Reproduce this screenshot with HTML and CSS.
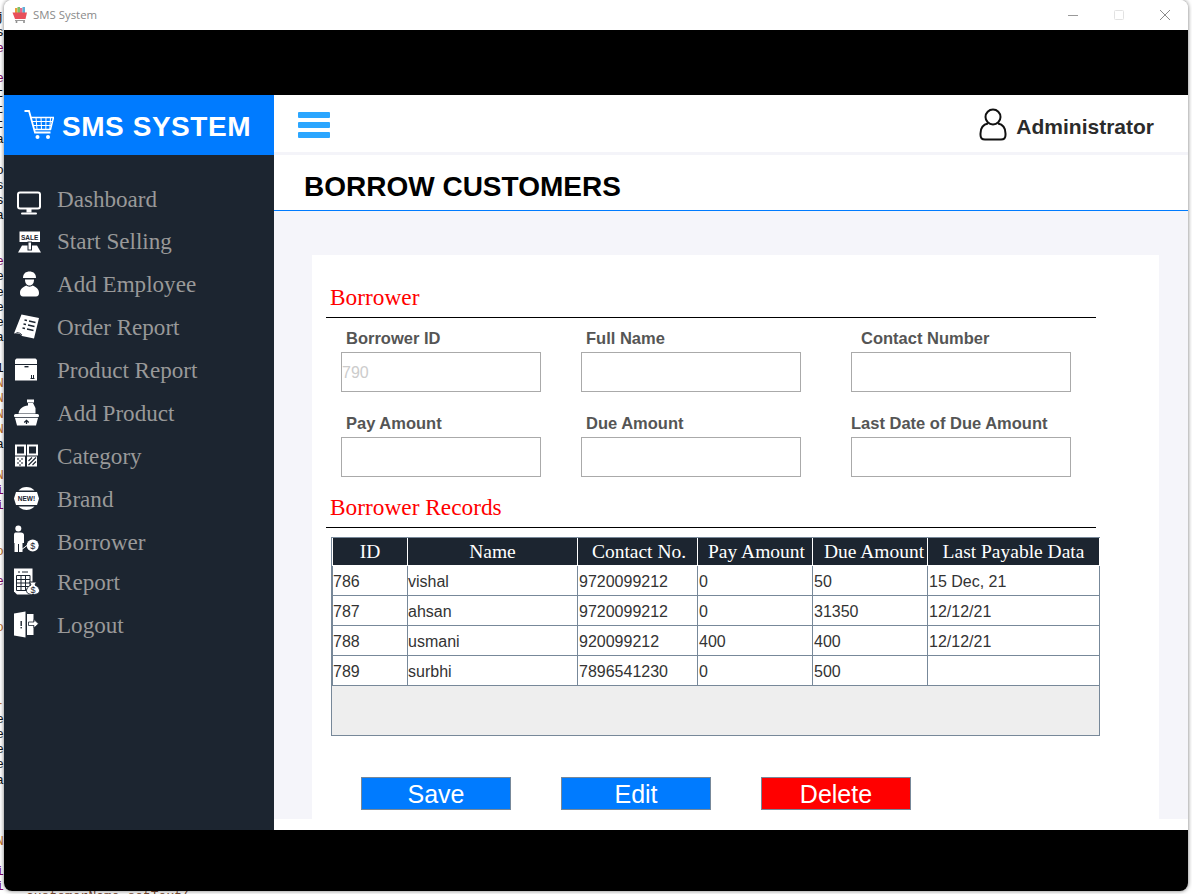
FILE: index.html
```html
<!DOCTYPE html>
<html lang="en">
<head>
    <meta charset="UTF-8">
    <meta name="viewport" content="width=device-width, initial-scale=1.0">
    <title>SMS System</title>
    <link rel="stylesheet" href="styles.css">
</head>
<body>

<!-- the code editor showing behind the window -->
<pre class="behind">j
s
<span class="pur">e</span>

<span class="pur">e</span>
t
t
t
a

o
s
s
a


<span class="pur">e</span>
e
e
e
e
a

1
<span class="org">N</span>
<span class="org">N</span>
<span class="org">N</span>
<span class="org">N</span>
a

<span class="org">N</span>
<span class="pur">i</span>
<span class="pur">i</span>


<span class="org">o</span>

<span class="pur">e</span>


<span class="org">o</span>




<span class="org">-</span>
e
e
e
e
a



<span class="org">N</span>

<span class="pur">i</span>
<span class="pur">i</span></pre>
<div class="behind-line">customerName.setText(</div>

<div class="window">

    <div class="titlebar">
        <svg class="app-icon" width="16" height="16" viewBox="0 0 16 16">
            <rect x="3" y="1" width="2.5" height="5.5" fill="#e8a13a"/>
            <rect x="5.5" y="0" width="2.5" height="6.5" fill="#7cc06a"/>
            <rect x="8" y="1" width="2.5" height="5.5" fill="#e86a8a"/>
            <rect x="10.5" y="0" width="2.5" height="6.5" fill="#5fb0d8"/>
            <path d="M0.5 5.5 H15 L13.5 12 H3 Z" fill="#e8505b"/>
            <path d="M3 13.5 H13" stroke="#9a9a9a" stroke-width="1"/>
            <circle cx="4.5" cy="15" r="1" fill="#888"/>
            <circle cx="12" cy="15" r="1" fill="#888"/>
        </svg>
        <span class="app-name">SMS System</span>
        <div class="controls">
            <div class="control"><svg width="12" height="12" viewBox="0 0 12 12"><path d="M1 6.5 H11" stroke="#999" stroke-width="1"/></svg></div>
            <div class="control"><svg width="12" height="12" viewBox="0 0 12 12"><rect x="1.5" y="1.5" width="9" height="9" rx="1" fill="none" stroke="#e2e2e2" stroke-width="1"/></svg></div>
            <div class="control"><svg width="12" height="12" viewBox="0 0 12 12"><path d="M1 1 L11 11 M11 1 L1 11" stroke="#8c8c8c" stroke-width="1"/></svg></div>
        </div>
    </div>

    <div class="black-band top-band"></div>

    <div class="app">
        <div class="sidebar">
            <div class="brand">
                <svg class="cart" width="30" height="30" viewBox="0 0 30 30" fill="none" stroke="#fff">
                    <path d="M0.5 1 H5 L11 22.5 H26.5" stroke-width="1.8"/>
                    <path d="M6.8 7.5 H29.5 L26.5 19.5 H10" stroke-width="1.5"/>
                    <path d="M8 11.5 H28.5 M9 15.5 H27.5 M12 7.5 L13 19.5 M17 7.5 L17.5 19.5 M22 7.5 L21.8 19.5 M26.5 7.5 L25.8 19.5" stroke-width="1"/>
                    <circle cx="13.5" cy="27" r="2" fill="#fff" stroke="none"/>
                    <circle cx="24" cy="27" r="2" fill="#fff" stroke="none"/>
                </svg>
                <span class="brand-name">SMS SYSTEM</span>
            </div>

            <div class="nav">
                <div class="nav-item first">
                    <svg class="nav-icon" viewBox="0 0 30 34">
                        <rect x="5" y="9.5" width="22" height="16" rx="2" fill="none" stroke="#fff" stroke-width="2"/>
                        <rect x="13.5" y="26" width="5" height="3.5" fill="#fff"/>
                        <rect x="8" y="29.5" width="16" height="2" rx="1" fill="#fff"/>
                    </svg>
                    <span>Dashboard</span>
                </div>
                <div class="nav-item">
                    <svg class="nav-icon" viewBox="0 0 30 34">
                        <rect x="6.5" y="6.5" width="20.5" height="10.5" fill="#fff"/>
                        <path d="M9 20.5 H24 L28 27.5 H5 Z" fill="#fff"/>
                        <rect x="15" y="17" width="3.5" height="8" fill="#fff" stroke="#1c2530" stroke-width="1"/>
                        <text class="tiny" x="16.7" y="14.5">SALE</text>
                    </svg>
                    <span>Start Selling</span>
                </div>
                <div class="nav-item">
                    <svg class="nav-icon" viewBox="0 0 30 34" fill="#fff">
                        <path d="M10 10 C10 5.5 13 3.5 16.5 3.5 C20 3.5 23 5.5 23 10 Z"/>
                        <path d="M12 11.5 H21 C21 15 19.5 17.5 16.5 17.5 C13.5 17.5 12 15 12 11.5 Z"/>
                        <path d="M13.5 17.5 C14.5 19 18.5 19 19.5 17.5 C23 19 26 21 26 25 C26 27 25 28.5 23 28.5 H10 C8 28.5 7 27 7 25 C7 21 10 19 13.5 17.5 Z"/>
                    </svg>
                    <span>Add Employee</span>
                </div>
                <div class="nav-item">
                    <svg class="nav-icon" viewBox="0 0 30 34">
                        <path d="M8.5 3.5 L26 7 L21 27.5 L9 25 C8 23 5 22 1 22.5 Z" fill="#fff"/>
                        <path d="M9 24 C8 22.5 6 21.5 3.5 21.5" fill="none" stroke="#1c2530" stroke-width="0.8"/>
                        <g stroke="#1c2530" stroke-width="1.3">
                            <path d="M11.5 9 L14 9.5 M16 10 L22.5 11.5"/>
                            <path d="M10.5 13 L13 13.5 M15 14 L21.5 15.5"/>
                            <path d="M9.5 17 L12 17.5 M14 18 L20.5 19.5"/>
                        </g>
                    </svg>
                    <span>Order Report</span>
                </div>
                <div class="nav-item">
                    <svg class="nav-icon" viewBox="0 0 30 34">
                        <path d="M3.5 4.5 H22.5 L24 6 V10 H2 V6 Z" fill="#fff"/>
                        <rect x="2" y="11" width="22" height="15.5" fill="#fff"/>
                        <rect x="11.5" y="12" width="4" height="1.4" fill="#1c2530"/>
                        <path d="M17.5 24.5 H21.5 M18.5 24 V21 M20.5 24 V21" stroke="#1c2530" stroke-width="1"/>
                    </svg>
                    <span>Product Report</span>
                </div>
                <div class="nav-item">
                    <svg class="nav-icon" viewBox="0 0 30 34" fill="#fff">
                        <rect x="14" y="2.5" width="7" height="3"/>
                        <path d="M15 6 H20 L22.5 11 V16.5 H5.5 C6 12 10 9 15 8.5 Z"/>
                        <rect x="1" y="17" width="25" height="3.2" rx="1.5"/>
                        <path d="M2 21 H25 L23 28.5 H4 Z"/>
                        <path d="M13.5 27 V23.5 M11.3 25.5 L13.5 23.3 L15.7 25.5" fill="none" stroke="#1c2530" stroke-width="1.3"/>
                    </svg>
                    <span>Add Product</span>
                </div>
                <div class="nav-item">
                    <svg class="nav-icon" viewBox="0 0 30 34">
                        <rect x="3" y="5.5" width="9" height="9" fill="none" stroke="#fff" stroke-width="2"/>
                        <rect x="15" y="5.5" width="9" height="9" fill="none" stroke="#fff" stroke-width="2"/>
                        <rect x="2" y="16.5" width="10" height="10" fill="#fff"/>
                        <rect x="14" y="16.5" width="10" height="10" fill="#fff"/>
                        <path d="M4 19 H6 M8 19 H10 M6 21 H8 M4 23 H6 M8 23 H10 M6 25 H8" stroke="#1c2530" stroke-width="1.2"/>
                        <path d="M15.5 21 L19 17.5 M15.5 25 L23 17.5 M19.5 25 L23 21.5" stroke="#1c2530" stroke-width="1.1"/>
                    </svg>
                    <span>Category</span>
                </div>
                <div class="nav-item">
                    <svg class="nav-icon" viewBox="0 0 30 34">
                        <path d="M5.5 7.5 A11 11 0 0 1 21.5 7.5 Z" fill="#fff"/>
                        <path d="M5.5 23.5 A11 11 0 0 0 21.5 23.5 Z" fill="#fff"/>
                        <path d="M3 9 H24 L26 15.5 L24 22 H3 L1 15.5 Z" fill="#fff"/>
                        <text class="tiny" x="13.5" y="18.2">NEW!</text>
                    </svg>
                    <span>Brand</span>
                </div>
                <div class="nav-item">
                    <svg class="nav-icon" viewBox="0 0 30 34" fill="#fff">
                        <circle cx="5.3" cy="2.5" r="3"/>
                        <path d="M2.5 6.5 H8 C9.8 6.5 11 7.5 11 9 V17 H9.5 V26 H6 V18 H5 V26 H1.5 V17 H1 V9 C1 7.5 1.5 6.5 2.5 6.5 Z"/>
                        <path d="M8 24 L14 19.5" stroke="#fff" stroke-width="1" fill="none"/>
                        <circle cx="19.7" cy="19.5" r="6"/>
                        <text class="coin" x="19.7" y="22.8">$</text>
                    </svg>
                    <span>Borrower</span>
                </div>
                <div class="nav-item tight">
                    <svg class="nav-icon" viewBox="0 0 30 34">
                        <path d="M1 2.5 H19.5 V28.5 H4 L1 25.5 Z" fill="#fff"/>
                        <path d="M5 6 H7 M9 6 H15" stroke="#1c2530" stroke-width="1"/>
                        <path d="M3.5 9.5 H17 V24.5 H3.5 Z M3.5 13.5 H17 M3.5 17 H17 M3.5 20.5 H17 M8 9.5 V24.5 M12.5 9.5 V24.5" fill="none" stroke="#1c2530" stroke-width="1"/>
                        <path d="M16.5 16 H23.5 L22 19 C25 20.5 26.5 22.5 26.5 24.5 C26.5 27 24.5 28.5 20 28.5 C15.5 28.5 13.5 27 13.5 24.5 C13.5 22.5 15 20.5 18 19 Z" fill="#fff" stroke="#1c2530" stroke-width="1"/>
                        <text class="coin" x="20" y="27">$</text>
                    </svg>
                    <span>Report</span>
                </div>
                <div class="nav-item">
                    <svg class="nav-icon" viewBox="0 0 30 34" fill="#fff">
                        <path d="M1 4.5 L12.5 2.5 V28.5 L1 26.5 Z"/>
                        <rect x="14" y="5" width="6.5" height="21"/>
                        <rect x="7.5" y="12" width="1.4" height="5" fill="#1c2530"/>
                        <rect x="7.5" y="18" width="1.4" height="1.4" fill="#1c2530"/>
                        <path d="M15.5 13 H21 V10.5 L25.5 14.8 L21 19 V16.5 H15.5 Z" stroke="#1c2530" stroke-width="0.8"/>
                    </svg>
                    <span>Logout</span>
                </div>
            </div>
        </div>

        <div class="main">
            <div class="topbar">
                <div class="burger"><span></span><span></span><span></span></div>
                <div class="user">
                    <svg width="28" height="33" viewBox="0 0 28 33" fill="none" stroke="#111" stroke-width="2">
                        <circle cx="14" cy="9" r="7.5"/>
                        <path d="M9 15.5 C4 16.5 1.5 20 1.5 25.5 V27 C1.5 30 3.5 31.5 6 31.5 H22 C24.5 31.5 26.5 30 26.5 27 V25.5 C26.5 20 24 16.5 19 15.5"/>
                    </svg>
                    <span class="user-name">Administrator</span>
                </div>
            </div>

            <div class="page-title"><h1>BORROW CUSTOMERS</h1></div>

            <div class="content">
                <div class="card">
                    <h2 class="section">Borrower</h2>

                    <div class="form">
                        <div class="field">
                            <label class="indent">Borrower ID</label>
                            <input class="input small" type="text" value="790" disabled>
                        </div>
                        <div class="field">
                            <label class="indent">Full Name</label>
                            <input class="input" type="text">
                        </div>
                        <div class="field">
                            <label class="indent-more">Contact Number</label>
                            <input class="input" type="text">
                        </div>
                        <div class="field">
                            <label class="indent">Pay Amount</label>
                            <input class="input small" type="text">
                        </div>
                        <div class="field">
                            <label class="indent">Due Amount</label>
                            <input class="input" type="text">
                        </div>
                        <div class="field">
                            <label>Last Date of Due Amount</label>
                            <input class="input" type="text">
                        </div>
                    </div>

                    <h2 class="section records">Borrower Records</h2>

                    <div class="table-frame">
                        <table>
                            <colgroup>
                                <col class="c-id"><col class="c-name"><col class="c-contact">
                                <col class="c-amount"><col class="c-amount"><col class="c-date">
                            </colgroup>
                            <thead>
                                <tr>
                                    <th>ID</th>
                                    <th>Name</th>
                                    <th class="th-pay">Contact No.</th>
                                    <th class="th-pay">Pay Amount</th>
                                    <th class="th-due">Due Amount</th>
                                    <th>Last Payable Data</th>
                                </tr>
                            </thead>
                            <tbody>
                                <tr>
                                    <td>786</td>
                                    <td>vishal</td>
                                    <td>9720099212</td>
                                    <td>0</td>
                                    <td>50</td>
                                    <td>15 Dec, 21</td>
                                </tr>
                                <tr>
                                    <td>787</td>
                                    <td>ahsan</td>
                                    <td>9720099212</td>
                                    <td>0</td>
                                    <td>31350</td>
                                    <td>12/12/21</td>
                                </tr>
                                <tr>
                                    <td>788</td>
                                    <td>usmani</td>
                                    <td>920099212</td>
                                    <td>400</td>
                                    <td>400</td>
                                    <td>12/12/21</td>
                                </tr>
                                <tr>
                                    <td>789</td>
                                    <td>surbhi</td>
                                    <td>7896541230</td>
                                    <td>0</td>
                                    <td>500</td>
                                    <td></td>
                                </tr>
                            </tbody>
                        </table>
                    </div>

                    <div class="buttons">
                        <button class="btn">Save</button>
                        <button class="btn">Edit</button>
                        <button class="btn btn-red">Delete</button>
                    </div>
                </div>
            </div>
        </div>
    </div>

    <div class="black-band bottom-band"></div>
</div>

</body>
</html>
```

FILE: styles.css
```css
:root{
    --blue: #007bff;
    --dark: #1c2530;
    --line: #778899;
    --page-bg: #f5f5fa;
}

*{
    box-sizing: border-box;
}

html,body{
    height: 100%;
}

body{
    position: relative;
    margin: 0;
    overflow: hidden;
    background: #fff;
    font-family: "Liberation Sans", Arial, sans-serif;
}

/* editor text behind the window */
.behind{
    position: absolute;
    top: 10px;
    left: -4px;
    margin: 0;
    font-family: "Liberation Mono", monospace;
    font-size: 13px;
    line-height: 15.25px;
    color: #111;
}
.behind .pur{
    color: #800060;
}
.behind .org{
    color: #c0702a;
}
.behind-line{
    position: absolute;
    top: 889px;
    left: 26px;
    font-family: "Liberation Mono", monospace;
    font-size: 13px;
    color: #7a4a30;
}

.window{
    position: relative;
    display: flex;
    flex-direction: column;
    width: 1184px;
    height: 891px;
    margin-left: 4px;
    overflow: hidden;
    border-radius: 8px;
    background: #fff;
    box-shadow: 0 0 4px rgba(0,0,0,0.55);
}

.titlebar{
    display: flex;
    align-items: center;
    height: 30px;
    padding-left: 8px;
    background: #fff;
}
.app-icon{
    margin-right: 5px;
}
.app-name{
    margin-top: -2px;
    font-family: "Open Sans", sans-serif;
    font-size: 11.4px;
    color: #8a8a8a;
}
.controls{
    display: flex;
    margin-left: auto;
}
.control{
    display: flex;
    align-items: center;
    justify-content: center;
    width: 46px;
    height: 30px;
}

.black-band{
    background: #000;
}
.top-band{
    height: 65px;
}
.bottom-band{
    height: 61px;
}

.app{
    display: flex;
    height: 735px;
}

.sidebar{
    width: 270px;
    background: var(--dark);
}
.brand{
    display: flex;
    align-items: center;
    gap: 8px;
    height: 60px;
    padding-left: 20px;
    background: var(--blue);
}
.cart{
    margin-top: -1px;
}
.brand-name{
    margin-top: 3px;
    font-size: 28px;
    font-weight: bold;
    font-kerning: none;
    letter-spacing: 0.55px;
    color: #fff;
}

.nav{
    padding-top: 24px;
}
.nav-item{
    display: flex;
    align-items: center;
    gap: 14px;
    height: 43px;
    padding-left: 9px;
    font-family: "Liberation Serif", serif;
    font-size: 23.1px;
    color: #999;
}
.nav-item.first{
    height: 41px;
}
.nav-item.tight{
    height: 37px;
    margin-bottom: 3px;
}
.nav-icon{
    flex: none;
    width: 30px;
    height: 34px;
    overflow: visible;
}
.tiny{
    font-family: "Liberation Sans", sans-serif;
    font-size: 6.5px;
    font-weight: bold;
    text-anchor: middle;
    fill: var(--dark);
}
.coin{
    font-family: "Liberation Sans", sans-serif;
    font-size: 9px;
    text-anchor: middle;
    fill: var(--dark);
}

.main{
    display: flex;
    flex-direction: column;
    flex: 1;
    background: #fff;
}

.topbar{
    display: flex;
    align-items: center;
    justify-content: space-between;
    height: 60px;
    padding: 0 34px 0 24px;
    border-bottom: 3px solid #f4f4f9;
}
.burger{
    display: flex;
    flex-direction: column;
    gap: 4px;
    margin-top: 3px;
}
.burger span{
    width: 32px;
    height: 6px;
    border-radius: 1px;
    background: #2ba6ff;
}
.user{
    display: flex;
    align-items: center;
    gap: 9px;
    margin-top: 2px;
}
.user-name{
    margin-top: 5px;
    font-size: 21px;
    font-weight: bold;
    color: #2b2b2b;
}

.page-title{
    height: 56px;
    padding-left: 30px;
    border-bottom: 1px solid var(--blue);
}
.page-title h1{
    margin: 0;
    font-size: 28px;
    line-height: 64px;
    color: #000;
}

.content{
    height: 608px;
    padding: 44px 29px 0 38px;
    background: var(--page-bg);
}
.card{
    height: 564px;
    padding: 27px 0 0 14px;
    background: #fff;
}

.section{
    width: 770px;
    height: 36px;
    margin: 0;
    padding-left: 4px;
    border-bottom: 1px solid #000;
    font-family: "Liberation Serif", serif;
    font-size: 23.33px;
    font-weight: normal;
    line-height: 30px;
    color: #f00;
}
.records{
    margin-top: 15px;
}

.form{
    display: grid;
    grid-template-columns: 240px 270px 220px;
    row-gap: 21px;
    margin-left: 15px;
    padding-top: 10px;
}
.field label{
    display: block;
    height: 20px;
    margin-bottom: 4px;
    font-size: 16.5px;
    font-weight: bold;
    line-height: 20px;
    color: #555;
}
.field .indent{
    padding-left: 5px;
}
.field .indent-more{
    padding-left: 10px;
}
.input{
    display: block;
    width: 220px;
    height: 40px;
    padding: 2px 0 0;
    border: 1px solid #aaa;
    border-radius: 0;
    outline: none;
    background: #fff;
    font-family: "Liberation Sans", sans-serif;
    font-size: 16px;
    color: #ccc;
}
.input.small{
    width: 200px;
}

.table-frame{
    width: 769px;
    height: 199px;
    margin: 9px 0 0 5px;
    border: 1px solid var(--line);
    background: #eee;
}
table{
    width: 767px;
    border-collapse: collapse;
    table-layout: fixed;
    background: #fff;
}
.c-id{
    width: 75px;
}
.c-name{
    width: 170px;
}
.c-contact{
    width: 120px;
}
.c-amount{
    width: 115px;
}
.c-date{
    width: 172px;
}
th{
    height: 27px;
    padding: 2px 0 0;
    border: 1px solid #fff;
    border-top: 0;
    background: var(--dark);
    font-family: "Liberation Serif", serif;
    font-size: 19.5px;
    font-weight: normal;
    color: #fff;
}
th.th-pay{
    padding-left: 3px;
}
th.th-due{
    padding-left: 8px;
}
td{
    height: 30px;
    padding: 4px 0 0;
    border: 1px solid var(--line);
    font-size: 16px;
    color: #333;
}
td:nth-child(n+3){
    padding-left: 1px;
}

.buttons{
    display: flex;
    gap: 50px;
    margin: 41px 0 0 35px;
}
.btn{
    width: 150px;
    height: 33px;
    padding: 2px 0 0;
    border: 1px solid var(--line);
    border-radius: 0;
    background: var(--blue);
    font-family: "Liberation Sans", sans-serif;
    font-size: 25px;
    color: #fff;
}
.btn-red{
    background: #f00;
}
```
